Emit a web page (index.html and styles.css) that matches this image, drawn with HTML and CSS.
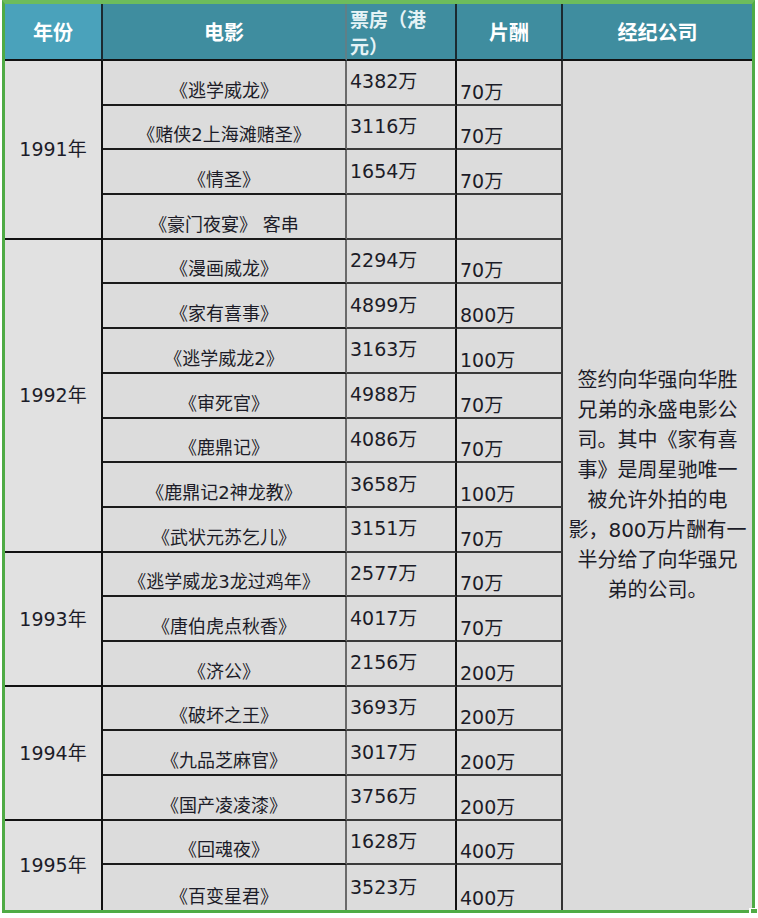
FILE: index.html
```html
<!DOCTYPE html>
<html lang="zh-CN">
<head>
<meta charset="utf-8">
<title>周星驰 1991-1995 电影票房与片酬</title>
<link rel="stylesheet" href="styles.css">
</head>
<body>
<div class="frame">
  <div class="sheet">
    <div class="hd hd-year">年份</div>
    <div class="hd hd-movie">电影</div>
    <div class="hd hd-box"><span class="hd-line">票房（港</span><span class="hd-line">元）</span></div>
    <div class="hd">片酬</div>
    <div class="hd hd-last">经纪公司</div>

    <div class="year span-4">1991年</div>
    <div class="movie">《逃学威龙》</div>
    <div class="box">4382万</div>
    <div class="pay">70万</div>
    <div class="company">签约向华强向华胜<br>兄弟的永盛电影公<br>司。其中《家有喜<br>事》是周星驰唯一<br>被允许外拍的电<br>影，800万片酬有一<br>半分给了向华强兄<br>弟的公司。</div>
    <div class="movie">《赌侠2上海滩赌圣》</div>
    <div class="box">3116万</div>
    <div class="pay">70万</div>
    <div class="movie">《情圣》</div>
    <div class="box">1654万</div>
    <div class="pay">70万</div>
    <div class="movie">《豪门夜宴》 客串</div>
    <div class="box"></div>
    <div class="pay"></div>

    <div class="year span-7">1992年</div>
    <div class="movie">《漫画威龙》</div>
    <div class="box">2294万</div>
    <div class="pay">70万</div>
    <div class="movie">《家有喜事》</div>
    <div class="box">4899万</div>
    <div class="pay">800万</div>
    <div class="movie">《逃学威龙2》</div>
    <div class="box">3163万</div>
    <div class="pay">100万</div>
    <div class="movie">《审死官》</div>
    <div class="box">4988万</div>
    <div class="pay">70万</div>
    <div class="movie">《鹿鼎记》</div>
    <div class="box">4086万</div>
    <div class="pay">70万</div>
    <div class="movie">《鹿鼎记2神龙教》</div>
    <div class="box">3658万</div>
    <div class="pay">100万</div>
    <div class="movie">《武状元苏乞儿》</div>
    <div class="box">3151万</div>
    <div class="pay">70万</div>

    <div class="year span-3">1993年</div>
    <div class="movie">《逃学威龙3龙过鸡年》</div>
    <div class="box">2577万</div>
    <div class="pay">70万</div>
    <div class="movie">《唐伯虎点秋香》</div>
    <div class="box">4017万</div>
    <div class="pay">70万</div>
    <div class="movie">《济公》</div>
    <div class="box">2156万</div>
    <div class="pay">200万</div>

    <div class="year span-3">1994年</div>
    <div class="movie">《破坏之王》</div>
    <div class="box">3693万</div>
    <div class="pay">200万</div>
    <div class="movie">《九品芝麻官》</div>
    <div class="box">3017万</div>
    <div class="pay">200万</div>
    <div class="movie">《国产凌凌漆》</div>
    <div class="box">3756万</div>
    <div class="pay">200万</div>

    <div class="year span-2 end">1995年</div>
    <div class="movie">《回魂夜》</div>
    <div class="box">1628万</div>
    <div class="pay">400万</div>
    <div class="movie end">《百变星君》</div>
    <div class="box end">3523万</div>
    <div class="pay end">400万</div>
  </div>
  <span class="handle"></span>
</div>
</body>
</html>
```

FILE: styles.css
```css
html, body {
  margin: 0;
  padding: 0;
  background: #ffffff;
}

body {
  font-family: "DejaVu Sans", "Noto Sans CJK SC", sans-serif;
  color: #1c1c28;
}

.frame {
  position: relative;
  margin-left: 2px;
  width: 747px;
  border: 3px solid #4fab45;
  border-top: 4px solid #6dbc5c;
}

.sheet {
  display: grid;
  grid-template-columns: 98px 244px 110px 106px 189px;
  grid-template-rows: 57px repeat(19, 44.7px);
  background: #dcdcdc;
}

.sheet > div {
  box-sizing: border-box;
  display: flex;
  min-width: 0;
}

/* header */
.hd {
  background: #3f8d9f;
  color: #ffffff;
  font-family: "Noto Sans CJK SC", sans-serif;
  font-weight: bold;
  font-size: 20px;
  line-height: 26px;
  align-items: center;
  justify-content: center;
  border-right: 2px solid #1b2a30;
  border-bottom: 2px solid #111111;
}

.hd-year {
  background: #4aa2bb;
}

.hd-movie {
  border-right-color: #5f7f87;
}

.sheet > .hd-box {
  flex-direction: column;
  align-items: flex-start;
  justify-content: center;
  padding-left: 3px;
  color: #e6f3f6;
  font-size: 19px;
}

.hd-line {
  display: block;
  line-height: 27px;
  height: 27px;
}

.hd-last {
  border-right: none;
}

/* body cells */
.year {
  background: #e1e1e1;
  font-size: 19px;
  line-height: 22px;
  align-items: center;
  justify-content: center;
  border-right: 2px solid #111111;
  border-bottom: 2px solid #111111;
}

.span-2 { grid-row: span 2; }
.span-3 { grid-row: span 3; }
.span-4 { grid-row: span 4; }
.span-7 { grid-row: span 7; }

.movie {
  font-size: 18px;
  line-height: 22px;
  justify-content: center;
  align-items: flex-end;
  padding-bottom: 2px;
  white-space: nowrap;
  border-right: 2px solid #6a6a6a;
  border-bottom: 2px solid #1a1a1a;
}

.box {
  font-size: 19px;
  line-height: 22px;
  align-items: center;
  padding-left: 3px;
  padding-bottom: 2px;
  border-right: 2px solid #111111;
  border-bottom: 2px solid #3a3a3a;
}

.pay {
  font-size: 19px;
  line-height: 22px;
  align-items: flex-end;
  padding-left: 3px;
  padding-bottom: 1px;
  border-right: 2px solid #333333;
  border-bottom: 2px solid #3a3a3a;
}

.sheet > .end {
  border-bottom: none;
}

.company {
  grid-row: span 19;
  background: #dbdbdb;
  font-size: 20px;
  line-height: 30px;
  align-items: center;
  justify-content: center;
  text-align: center;
  padding-bottom: 2px;
}

/* Excel fill handle at the bottom-right corner */
.handle {
  position: absolute;
  right: -5px;
  bottom: -4px;
  width: 6px;
  height: 5px;
  background: #4fab45;
  border-left: 2px solid #ffffff;
  border-top: 1px solid #ffffff;
}
```
